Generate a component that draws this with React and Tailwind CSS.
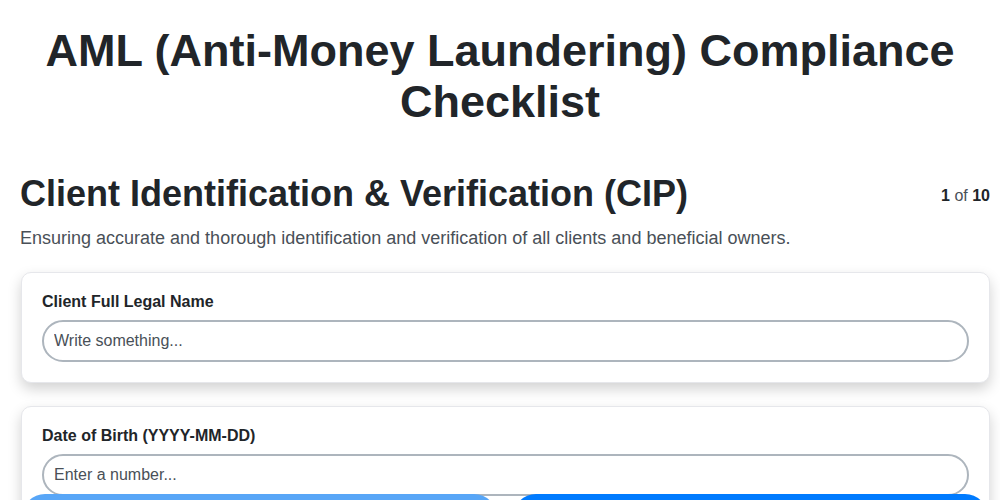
// App.jsx
// Checklist AML: título, sección actual con contador y tarjetas de campos.
// La barra de navegación queda fija abajo, tapando parte del contenido.

const FIELDS = [
  { label: "Client Full Legal Name", placeholder: "Write something..." },
  { label: "Date of Birth (YYYY-MM-DD)", placeholder: "Enter a number..." },
  { label: "Nationality", placeholder: "Write something..." },
];

function FieldCard({ label, placeholder }) {
  return (
    <div className="bg-white rounded-[10px] border border-[#e6e7eb] shadow-[0_6px_14px_rgba(0,0,0,0.18)] px-5 pt-[18px] pb-5">
      <label className="block text-[16px] font-bold text-[#212529] mb-[7px] leading-[22px]">
        {label}
      </label>
      <input
        type="text"
        placeholder={placeholder}
        className="w-full h-[42px] rounded-full border-2 border-[#adb5bd] px-[10px] text-[16px] text-[#212529] placeholder:text-[#495057] outline-none bg-white"
      />
    </div>
  );
}

export default function App() {
  return (
    <div className="min-h-screen bg-white font-['Liberation_Sans',Arial,sans-serif] text-[#212529]">
      {/* Título principal */}
      <h1 className="pt-[25px] text-center text-[45px] font-bold leading-[51px] px-10">
        AML (Anti-Money Laundering) Compliance Checklist
      </h1>

      <main className="pl-5 pr-[10px] mt-[45px] pb-24">
        {/* Encabezado de sección + contador */}
        <div className="flex items-start justify-between">
          <h2 className="text-[36px] font-bold leading-[43px]">
            Client Identification &amp; Verification (CIP)
          </h2>
          <p className="text-[16px] mt-[12px] text-[#212529]">
            <span className="font-bold">1</span>
            <span className="text-[#495057]"> of </span>
            <span className="font-bold">10</span>
          </p>
        </div>
        <p className="mt-[10px] text-[18px] leading-[27px] text-[#495057]">
          Ensuring accurate and thorough identification and verification of all clients and beneficial owners.
        </p>

        {/* Tarjetas de campos */}
        <div className="mt-[20px] ml-px flex flex-col gap-[23px]">
          {FIELDS.map((f) => (
            <FieldCard key={f.label} {...f} />
          ))}
        </div>
      </main>

      {/* Navegación fija: anterior / siguiente */}
      <div className="fixed left-0 right-0 bottom-[-40px] flex gap-4 pl-[22px] pr-[12px]">
        <button aria-label="Previous" className="flex-1 h-[46px] rounded-full bg-[#58a6f7]" />
        <button aria-label="Next" className="flex-1 h-[46px] rounded-full bg-[#007bff]" />
      </div>
    </div>
  );
}
